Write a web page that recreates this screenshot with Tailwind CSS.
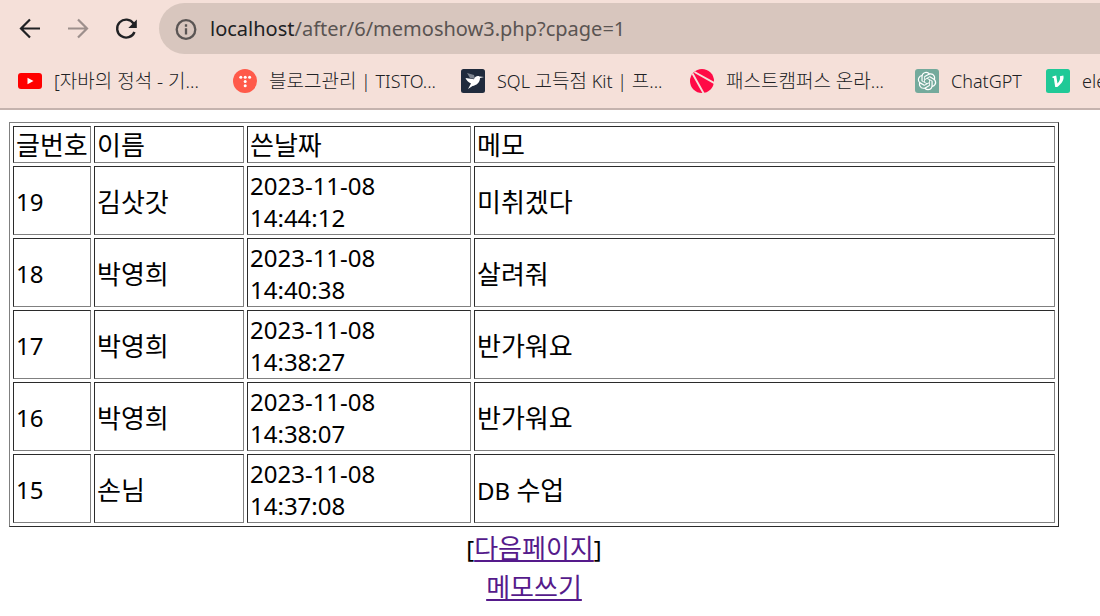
<!DOCTYPE html>
<html lang="ko">
<head>
  <meta charset="UTF-8" />
  <meta name="viewport" content="width=device-width, initial-scale=1.0"/>
  <title>localhost/after/6/memoshow3.php</title>
  <script src="https://cdn.jsdelivr.net/npm/@tailwindcss/browser@4"></script>
</head>
<body class="bg-white text-black overflow-x-hidden font-['Noto_Sans','Noto_Sans_CJK_KR',sans-serif]">

  <!-- Browser bar -->
  <header class="bg-[#f5e0d9] border-b-2 border-[#c5b3ae] overflow-hidden">
    <div class="flex items-center pt-[3px] pl-[18px]">
      <button type="button" aria-label="뒤로" class="w-6 h-6 mr-6">
        <svg viewBox="0 0 24 24" class="w-6 h-6" fill="none" stroke="#202124" stroke-width="2.2"><path d="M22 11.500H4M12 2.500l-9 9 9 9"/></svg>
      </button>
      <button type="button" aria-label="앞으로" class="w-6 h-6 mr-6">
        <svg viewBox="0 0 24 24" class="w-6 h-6" fill="none" stroke="#9d8f8c" stroke-width="2.2"><path d="M2 11.500h18M12 2.500l9 9-9 9"/></svg>
      </button>
      <button type="button" aria-label="새로고침" class="w-6 h-6 mr-[21px]">
        <svg viewBox="0 0 24 24" class="w-6 h-6" fill="none" stroke="#202124" stroke-width="2.4"><path d="M19.600 6.500A9 9 0 1 0 20.500 15"/><path d="M22.800 2.500v8.500h-8.500z" fill="#202124" stroke="none"/></svg>
      </button>
      <div class="flex-1 flex items-center h-[51px] pl-[16px] bg-[#d8c6be] rounded-l-full">
        <svg viewBox="0 0 22 22" class="w-[22px] h-[22px] mr-[13px] shrink-0" fill="none" stroke="#5a5554" stroke-width="2.3"><circle cx="11" cy="11.500" r="9.300"/><path d="M11 10.200v6.300M11 6.300v2.400"/></svg>
        <div class="text-[20px] leading-7 text-[#5a5452] whitespace-nowrap"><span class="text-[#202124]">localhost</span>/after/6/memoshow3.php?cpage=1</div>
      </div>
    </div>

    <!-- Bookmarks -->
    <nav class="flex items-center h-[54px] pl-[18px] text-[18px] font-light text-[#202124] whitespace-nowrap">
      <a href="#" class="flex items-center w-[215px] shrink-0">
        <svg viewBox="0 0 24 24" class="w-6 h-6 mr-3 shrink-0"><rect y="4" width="24" height="16" rx="3" fill="#f00"/><path d="M9.500 8.800v6.400l6-3.200z" fill="#fff"/></svg>
        <span>[<span class="text-[19px]">자바의 정석 - 기</span>...</span>
      </a>
      <a href="#" class="flex items-center w-[228px] shrink-0">
        <svg viewBox="0 0 24 24" class="w-6 h-6 mr-3 shrink-0"><circle cx="12" cy="12" r="12" fill="#ff5a4a"/><g fill="#fff"><circle cx="7.800" cy="8.300" r="1.500"/><circle cx="12.200" cy="8.300" r="1.500"/><circle cx="16.600" cy="8.300" r="1.500"/><circle cx="12.200" cy="12.500" r="1.500"/><circle cx="12.200" cy="16.700" r="1.500"/></g></svg>
        <span><span class="text-[19px]">블로그관리</span> | TISTO...</span>
      </a>
      <a href="#" class="flex items-center w-[229px] shrink-0">
        <svg viewBox="0 0 24 24" class="w-6 h-6 mr-3 shrink-0"><rect width="24" height="24" rx="2.500" fill="#202b3d"/><path d="M6 4l7 2 1 4-5-1z" fill="#7d8490"/><path d="M4.500 9l8.500 1.200C14 7.500 16.500 6.500 18.500 7.500l4.500.6-4 .8c-.2 5-3.500 7.200-7.500 8L7 20l3-5.500C7.500 13.500 5.500 11.500 4.500 9z" fill="#fff"/></svg>
        <span>SQL <span class="text-[19px]">고득점</span> Kit | <span class="text-[19px]">프</span>...</span>
      </a>
      <a href="#" class="flex items-center w-[225px] shrink-0">
        <svg viewBox="0 0 24 24" class="w-6 h-6 mr-3 shrink-0"><circle cx="12" cy="12" r="12" fill="#ff0a46"/><path d="M4.500 3L25 14.500M2.500 4.500L14 25" fill="none" stroke="#f5e0d9" stroke-width="1.900"/></svg>
        <span><span class="text-[19px]">패스트캠퍼스 온라</span>...</span>
      </a>
      <a href="#" class="flex items-center w-[131px] shrink-0">
        <svg viewBox="0 0 24 24" class="w-6 h-6 mr-3 shrink-0"><path d="M3 0h18a3 3 0 0 1 3 3v21H3a3 3 0 0 1-3-3V3a3 3 0 0 1 3-3z" fill="#74aa9c"/>
          <path transform="translate(2.800 2.800) scale(.77)" fill="#fff" d="M22.2819 9.8211a5.9847 5.9847 0 0 0-.5157-4.9108 6.0462 6.0462 0 0 0-6.5098-2.9A6.0651 6.0651 0 0 0 4.9807 4.1818a5.9847 5.9847 0 0 0-3.9977 2.9 6.0462 6.0462 0 0 0 .7427 7.0966 5.98 5.98 0 0 0 .511 4.9107 6.051 6.051 0 0 0 6.5146 2.9001A5.9847 5.9847 0 0 0 13.2599 24a6.0557 6.0557 0 0 0 5.7718-4.2058 5.9894 5.9894 0 0 0 3.9977-2.9001 6.0557 6.0557 0 0 0-.7475-7.0729zm-9.022 12.6081a4.4755 4.4755 0 0 1-2.8764-1.0408l.1419-.0804 4.7783-2.7582a.7948.7948 0 0 0 .3927-.6813v-6.7369l2.02 1.1686a.071.071 0 0 1 .038.052v5.5826a4.504 4.504 0 0 1-4.4945 4.4944zm-9.6607-4.1254a4.4708 4.4708 0 0 1-.5346-3.0137l.142.0852 4.783 2.7582a.7712.7712 0 0 0 .7806 0l5.8428-3.3685v2.3324a.0804.0804 0 0 1-.0332.0615L9.74 19.9502a4.4992 4.4992 0 0 1-6.1408-1.6464zM2.3408 7.8956a4.485 4.485 0 0 1 2.3655-1.9728V11.6a.7664.7664 0 0 0 .3879.6765l5.8144 3.3543-2.0201 1.1685a.0757.0757 0 0 1-.071 0l-4.8303-2.7865A4.504 4.504 0 0 1 2.3408 7.872zm16.5963 3.8558L13.1038 8.364 15.1192 7.2a.0757.0757 0 0 1 .071 0l4.8303 2.7913a4.4944 4.4944 0 0 1-.6765 8.1042v-5.6772a.79.79 0 0 0-.407-.667zm2.0107-3.0231l-.142-.0852-4.7735-2.7818a.7759.7759 0 0 0-.7854 0L9.409 9.2297V6.8974a.0662.0662 0 0 1 .0284-.0615l4.8303-2.7866a4.4992 4.4992 0 0 1 6.6802 4.66zM8.3065 12.863l-2.02-1.1638a.0804.0804 0 0 1-.038-.0567V6.0742a4.4992 4.4992 0 0 1 7.3757-3.4537l-.142.0805L8.704 5.459a.7948.7948 0 0 0-.3927.6813zm1.0976-2.3654l2.602-1.4998 2.6069 1.4998v2.9994l-2.5974 1.4997-2.6067-1.4997Z"/>
        </svg>
        <span>ChatGPT</span>
      </a>
      <a href="#" class="flex items-center shrink-0">
        <svg viewBox="0 0 24 24" class="w-6 h-6 mr-3 shrink-0"><rect width="24" height="24" rx="2.500" fill="#20c997"/><path d="M6.500 7.500l3.700-1 1.300 8c2.200-2.500 3-4.500 2.400-7.200l3.400-.8c1.200 4-1.500 8-6 11.500H9.200L7.800 9H6.500z" fill="#fff"/></svg>
        <span>ele</span>
      </a>
    </nav>
  </header>

  <!-- Memo list -->
  <main class="pt-3 pl-[9px] pr-[41px] text-2xl leading-8">
    <table class="w-full table-fixed border-separate border-spacing-[3px] border border-t-[#808080] border-l-[#808080] border-b-[#2b2b2b] border-r-[#2b2b2b] [&_td]:h-[69px] [&_td]:px-[2px] [&_td]:pt-[3px] [&_td]:border [&_td]:border-t-[#2b2b2b] [&_td]:border-l-[#2b2b2b] [&_td]:border-b-[#808080] [&_td]:border-r-[#808080] [&_th]:h-[37px] [&_th]:px-[2px] [&_th]:border [&_th]:border-t-[#2b2b2b] [&_th]:border-l-[#2b2b2b] [&_th]:border-b-[#808080] [&_th]:border-r-[#808080]">
      <colgroup>
        <col class="w-[78px]" />
        <col class="w-[150px]" />
        <col class="w-[224px]" />
        <col />
      </colgroup>
      <thead>
        <tr class="text-left text-[26px] whitespace-nowrap [&_th]:font-normal">
          <th>글번호</th>
          <th>이름</th>
          <th>쓴날짜</th>
          <th>메모</th>
        </tr>
      </thead>
      <tbody>
        <tr>
          <td>19</td>
          <td><span class="text-[26px]">김삿갓</span></td>
          <td>2023-11-08<br />14:44:12</td>
          <td><span class="text-[26px]">미취겠다</span></td>
        </tr>
        <tr>
          <td>18</td>
          <td><span class="text-[26px]">박영희</span></td>
          <td>2023-11-08<br />14:40:38</td>
          <td><span class="text-[26px]">살려줘</span></td>
        </tr>
        <tr>
          <td>17</td>
          <td><span class="text-[26px]">박영희</span></td>
          <td>2023-11-08<br />14:38:27</td>
          <td><span class="text-[26px]">반가워요</span></td>
        </tr>
        <tr>
          <td>16</td>
          <td><span class="text-[26px]">박영희</span></td>
          <td>2023-11-08<br />14:38:07</td>
          <td><span class="text-[26px]">반가워요</span></td>
        </tr>
        <tr>
          <td>15</td>
          <td><span class="text-[26px]">손님</span></td>
          <td>2023-11-08<br />14:37:08</td>
          <td>DB <span class="text-[26px]">수업</span></td>
        </tr>
      </tbody>
    </table>

    <div class="pt-[2px] text-center leading-[38px]">
      <p>[<a href="#" class="text-[26px] text-[#551a8b] underline">다음페이지</a>]</p>
      <p><a href="#" class="text-[26px] text-[#551a8b] underline">메모쓰기</a></p>
    </div>
  </main>

</body>
</html>
